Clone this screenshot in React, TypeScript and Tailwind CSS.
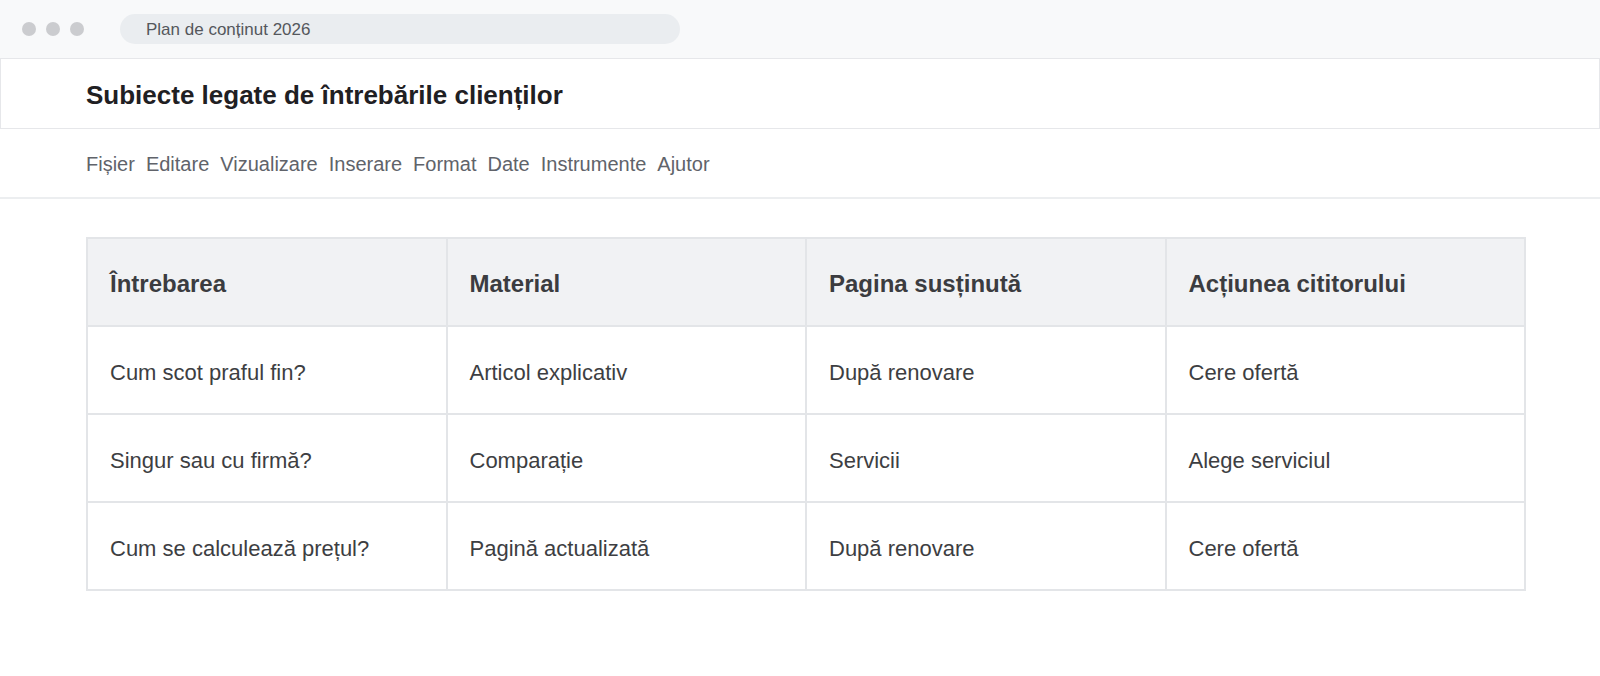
import React from "react";

const menu = ["Fișier", "Editare", "Vizualizare", "Inserare", "Format", "Date", "Instrumente", "Ajutor"];

const columns = ["Întrebarea", "Material", "Pagina susținută", "Acțiunea cititorului"];

const rows = [
  ["Cum scot praful fin?", "Articol explicativ", "După renovare", "Cere ofertă"],
  ["Singur sau cu firmă?", "Comparație", "Servicii", "Alege serviciul"],
  ["Cum se calculează prețul?", "Pagină actualizată", "După renovare", "Cere ofertă"],
];

export default function App() {
  return (
    <div className="min-h-screen bg-white font-['Liberation_Sans',Arial,sans-serif]">
      {/* Window chrome */}
      <div className="h-[58px] bg-[#f8f9fa] flex items-center pl-[22px]">
        <div className="flex gap-[10px]">
          <span className="w-[14px] h-[14px] rounded-full bg-[#cbcccf]" />
          <span className="w-[14px] h-[14px] rounded-full bg-[#cbcccf]" />
          <span className="w-[14px] h-[14px] rounded-full bg-[#cbcccf]" />
        </div>
        <div className="ml-[36px] w-[560px] h-[30px] rounded-full bg-[#eaedf0] flex items-center pl-[26px] pt-[2px] text-[17px] text-[#54575c]">
          Plan de conținut 2026
        </div>
      </div>

      {/* Document title */}
      <div className="h-[71px] border border-[#e6e7ea] flex items-center pl-[85px] pt-[3px]">
        <h1 className="text-[26px] font-bold text-[#1f2023]">Subiecte legate de întrebările clienților</h1>
      </div>

      {/* Menu bar */}
      <div className="h-[70px] border-b-2 border-[#eceef0] flex items-center pl-[86px] pt-[2px] gap-[11px] text-[20px] text-[#60636a]">
        {menu.map(m => (
          <span key={m}>{m}</span>
        ))}
      </div>

      {/* Sheet */}
      <div className="pt-[38px] pl-[86px]">
        <table className="w-[1440px] table-fixed border-collapse">
          <thead>
            <tr>
              {columns.map(c => (
                <th
                  key={c}
                  className="h-[88px] border-2 border-[#e3e5e8] bg-[#f1f2f4] text-left pl-[22px] pt-[4px] text-[24px] font-bold text-[#3b3c40]"
                >
                  {c}
                </th>
              ))}
            </tr>
          </thead>
          <tbody>
            {rows.map((r, i) => (
              <tr key={i}>
                {r.map((cell, j) => (
                  <td
                    key={j}
                    className="h-[88px] border-2 border-[#e3e5e8] pl-[22px] pt-[5px] text-[22px] text-[#3d3e42]"
                  >
                    {cell}
                  </td>
                ))}
              </tr>
            ))}
          </tbody>
        </table>
      </div>
    </div>
  );
}
